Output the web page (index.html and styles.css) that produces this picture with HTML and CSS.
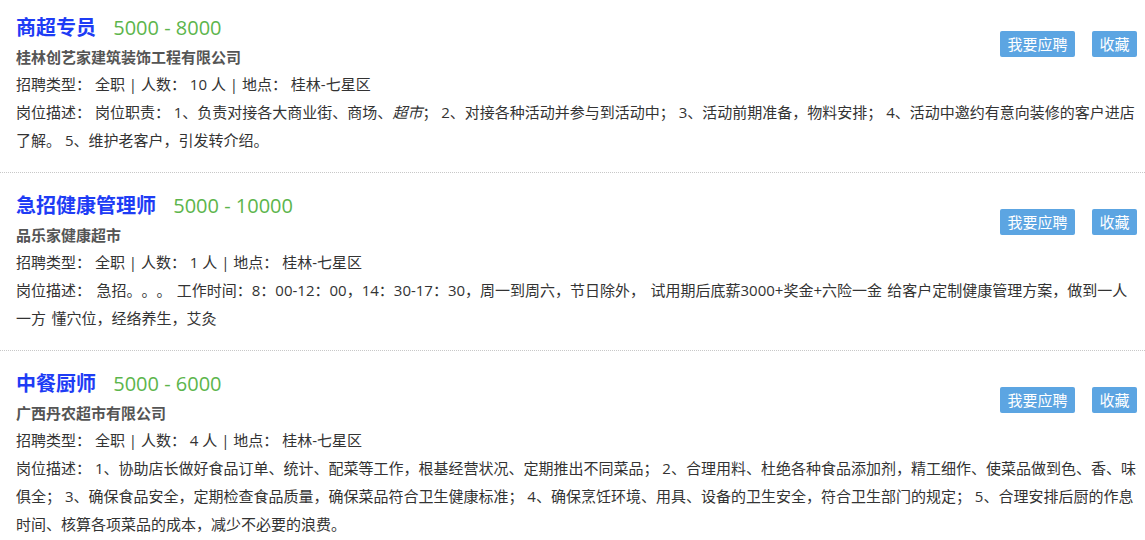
FILE: index.html
```html
<!DOCTYPE html>
<html lang="zh-CN">
<head>
  <meta charset="UTF-8">
  <meta name="viewport" content="width=device-width, initial-scale=1.0">
  <title>招聘信息</title>
  <link rel="stylesheet" href="styles.css">
</head>
<body>
  <ul class="job-list">
    <li class="job">
      <div class="job-head">
        <div>
          <h2 class="job-title">商超专员 <span class="salary">5000 - 8000</span></h2>
          <p class="company">桂林创艺家建筑装饰工程有限公司</p>
        </div>
        <div class="actions">
          <a href="#" class="btn">我要应聘</a>
          <a href="#" class="btn">收藏</a>
        </div>
      </div>
      <p class="info">招聘类型： 全职 | 人数： 10 人 | 地点： 桂林-七星区</p>
      <p class="desc">岗位描述： 岗位职责： 1、负责对接各大商业街、商场、<em>超市</em>； 2、对接各种活动并参与到活动中； 3、活动前期准备，物料安排； 4、活动中邀约有意向装修的客户进店了解。 5、维护老客户，引发转介绍。</p>
    </li>
    <li class="job">
      <div class="job-head">
        <div>
          <h2 class="job-title">急招健康管理师 <span class="salary">5000 - 10000</span></h2>
          <p class="company">品乐家健康超市</p>
        </div>
        <div class="actions">
          <a href="#" class="btn">我要应聘</a>
          <a href="#" class="btn">收藏</a>
        </div>
      </div>
      <p class="info">招聘类型： 全职 | 人数： 1 人 | 地点： 桂林-七星区</p>
      <p class="desc desc-loose">岗位描述： 急招。&#8203;。&#8203;。 工作时间：8：00-12：00，14：30-17：30，周一到周六，节日除外， 试用期后底薪3000+奖金+六险一金 给客户定制健康管理方案，做到一人一方 懂穴位，经络养生，艾灸</p>
    </li>
    <li class="job">
      <div class="job-head">
        <div>
          <h2 class="job-title">中餐厨师 <span class="salary">5000 - 6000</span></h2>
          <p class="company">广西丹农超市有限公司</p>
        </div>
        <div class="actions">
          <a href="#" class="btn">我要应聘</a>
          <a href="#" class="btn">收藏</a>
        </div>
      </div>
      <p class="info">招聘类型： 全职 | 人数： 4 人 | 地点： 桂林-七星区</p>
      <p class="desc">岗位描述： 1、协助店长做好食品订单、统计、配菜等工作，根基经营状况、定期推出不同菜品； 2、合理用料、杜绝各种食品添加剂，精工细作、使菜品做到色、香、味俱全； 3、确保食品安全，定期检查食品质量，确保菜品符合卫生健康标准； 4、确保烹饪环境、用具、设备的卫生安全，符合卫生部门的规定； 5、合理安排后厨的作息时间、核算各项菜品的成本，减少不必要的浪费。</p>
    </li>
  </ul>
</body>
</html>
```

FILE: styles.css
```css
body {
  margin: 0;
  font-family: "Open Sans", "Noto Sans CJK SC", sans-serif;
  font-size: 15px;
  color: #333;
  background-color: #fff;
  text-spacing-trim: space-all;
}

.job-list {
  list-style: none;
  margin: 0;
  padding: 0;
}

.job {
  padding: 17px 8px 18px 16px;
  border-bottom: 1px dotted #c8c8c8;
}

.job:first-child {
  padding-top: 12px;
}

.job-head {
  display: flex;
  justify-content: space-between;
  align-items: flex-start;
}

.job-title {
  margin: 0;
  font-size: 20px;
  line-height: 32px;
  font-weight: bold;
  color: #1e3cf5;
}

.salary {
  margin-left: 12px;
  font-weight: normal;
  color: #5cb54c;
}

.company {
  margin: 0;
  line-height: 26px;
  font-weight: bold;
  color: #555;
}

.actions {
  display: flex;
  gap: 17px;
  margin-top: 19px;
}

.btn {
  display: block;
  height: 26px;
  line-height: 26px;
  padding: 0 7.5px;
  border-radius: 2px;
  background-color: #5ca5e2;
  color: #fff;
  text-decoration: none;
}

.info,
.desc {
  margin: 0;
  line-height: 28px;
}

.desc-loose {
  word-spacing: 1.5px;
}
```
